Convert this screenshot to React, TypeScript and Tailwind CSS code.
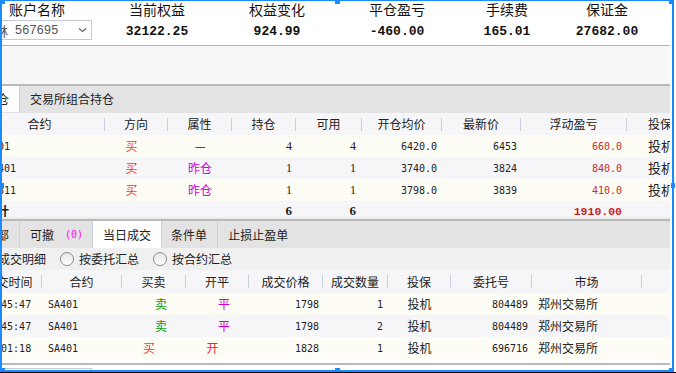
import React from 'react';

const mono = "font-['DejaVu_Sans_Mono','Noto_Sans_CJK_SC',monospace]";

const summary = [
  { label: '当前权益', value: '32122.25' },
  { label: '权益变化', value: '924.99' },
  { label: '平仓盈亏', value: '-460.00' },
  { label: '手续费', value: '165.01', narrow: true },
  { label: '保证金', value: '27682.00', narrow: true },
];

const positions = [
  { code: 'SM401', dir: '买', attr: '—', hold: '4', avail: '4', open: '6420.0', last: '6453', pnl: '660.0' },
  { code: 'rb2401', dir: '买', attr: '昨仓', hold: '1', avail: '1', open: '3740.0', last: '3824', pnl: '840.0' },
  { code: 'hc2311', dir: '买', attr: '昨仓', hold: '1', avail: '1', open: '3798.0', last: '3839', pnl: '410.0' },
];

const trades = [
  { time: '10:45:47', code: 'SA401', side: '卖', oc: '平', price: '1798', qty: '1', order: '804489' },
  { time: '10:45:47', code: 'SA401', side: '卖', oc: '平', price: '1798', qty: '2', order: '804489' },
  { time: '11:01:18', code: 'SA401', side: '买', oc: '开', price: '1828', qty: '1', order: '696716' },
];

function Sep() {
  return <span className="w-px h-[13px] bg-[#c9d0df] shrink-0" />;
}

function HeadCell({ w, text }: { w: string; text: string }) {
  return (
    <div className={`${w} shrink-0 flex items-center`}>
      <span className="flex-1 text-center">{text}</span>
      <Sep />
    </div>
  );
}

function Summary() {
  return (
    <div className="h-[45px] shrink-0 bg-white flex -ml-[23px]">
      <div className="w-[120px] shrink-0 flex flex-col">
        <div className="h-[20px] text-[14px] leading-[18px] text-center text-[#111]">账户名称</div>
        <div className="ml-[5px] w-[110px] h-[20px] border border-[#c3cad8] bg-white flex items-center pl-[12px] pr-[4px] text-[#555]">
          <span className="text-[13px] leading-none">林</span>
          <span className="ml-[7px] text-[12.5px] leading-none font-['Liberation_Sans',sans-serif] tracking-[0.3px]">567695</span>
          <svg className="ml-auto" width="9" height="6" viewBox="0 0 9 6">
            <path d="M1 1.5 L4.5 4.5 L8 1.5" fill="none" stroke="#666" strokeWidth="1.2" />
          </svg>
        </div>
      </div>
      {summary.map((s) => (
        <div key={s.label} className={`${s.narrow ? 'w-[100px]' : 'w-[120px]'} shrink-0 flex flex-col items-center`}>
          <div className="h-[20px] text-[14px] leading-[18px] text-[#111]">{s.label}</div>
          <div className="h-[22px] leading-[24px] text-[13px] font-bold text-[#111] font-['Liberation_Mono',monospace]">{s.value}</div>
        </div>
      ))}
    </div>
  );
}

function PositionPanel() {
  return (
    <div className="h-[131px] shrink-0 overflow-hidden flex flex-col">
      <div className="h-[27px] shrink-0 bg-[#e3e3e3] flex items-start text-[12px] text-[#222] -ml-[25px]">
        <div className="h-[26px] bg-white border-r border-[#c9d0df] px-[10px] flex items-center">持仓</div>
        <div className="h-[26px] px-[10px] flex items-center">交易所组合持仓</div>
      </div>
      <div className="-ml-[25px] text-[12px]">
        <div className="h-[22px] bg-[#f6f6f9] flex text-[#222]">
          <HeadCell w="w-[130px]" text="合约" />
          <HeadCell w="w-[63px]" text="方向" />
          <HeadCell w="w-[64px]" text="属性" />
          <HeadCell w="w-[64px]" text="持仓" />
          <HeadCell w="w-[66px]" text="可用" />
          <HeadCell w="w-[80px]" text="开仓均价" />
          <HeadCell w="w-[79px]" text="最新价" />
          <HeadCell w="w-[106px]" text="浮动盈亏" />
          <div className="w-[66px] shrink-0 flex items-center justify-center">投保</div>
        </div>
        {positions.map((p, i) => (
          <div key={p.code} className={`h-[22px] flex items-center ${i % 2 ? 'bg-[#f6f6f9]' : 'bg-[#fdfdf6]'}`}>
            <div className={`w-[130px] shrink-0 pl-[5px] text-[10px] ${mono} text-[#222]`}>{p.code}</div>
            <div className="w-[63px] shrink-0 text-center pr-[10px] text-[#ff3333]">{p.dir}</div>
            <div className={`w-[64px] shrink-0 text-center ${p.attr === '—' ? 'text-[#222]' : 'text-[#d000d0]'}`}>{p.attr}</div>
            <div className="w-[64px] shrink-0 text-right pr-[4px] text-[12px] font-['Liberation_Serif',serif] text-[#222]">{p.hold}</div>
            <div className="w-[66px] shrink-0 text-right pr-[6px] text-[12px] font-['Liberation_Serif',serif] text-[#222]">{p.avail}</div>
            <div className={`w-[80px] shrink-0 text-right pr-[5px] text-[10px] ${mono} text-[#222]`}>{p.open}</div>
            <div className={`w-[79px] shrink-0 text-right pr-[4px] text-[10px] ${mono} text-[#222]`}>{p.last}</div>
            <div className={`w-[106px] shrink-0 text-right pr-[5px] text-[10px] ${mono} text-[#c42b2b]`}>{p.pnl}</div>
            <div className="w-[66px] shrink-0 pl-[21px] text-[13px] text-[#222]">投机</div>
          </div>
        ))}
        <div className="h-[22px] flex items-start bg-[#f6f6f9] font-bold">
          <div className="w-[130px] shrink-0 pl-[10px] text-[12px] leading-[20px]">合计</div>
          <div className="w-[63px] shrink-0" />
          <div className="w-[64px] shrink-0" />
          <div className="w-[64px] shrink-0 text-right pr-[4px] text-[13px] leading-[20px] font-['Liberation_Serif',serif]">6</div>
          <div className="w-[66px] shrink-0 text-right pr-[6px] text-[13px] leading-[20px] font-['Liberation_Serif',serif]">6</div>
          <div className="w-[80px] shrink-0" />
          <div className="w-[79px] shrink-0" />
          <div className="w-[106px] shrink-0 text-right pr-[5px] text-[11.5px] leading-[21px] font-['Liberation_Mono',monospace] text-[#c81e1e]">1910.00</div>
        </div>
      </div>
    </div>
  );
}

function Radio({ label }: { label: string }) {
  return (
    <div className="flex items-center gap-[5px]">
      <span className="w-[14px] h-[14px] rounded-full border border-[#8a8a8a] bg-gradient-to-b from-[#e6e6e6] to-white" />
      <span>{label}</span>
    </div>
  );
}

function TradePanel() {
  return (
    <div className="h-[142px] shrink-0 overflow-hidden flex flex-col text-[12px] text-[#222]">
      <div className="h-[27px] shrink-0 bg-[#e3e3e3] flex items-start -ml-[25px]">
        <div className="h-[27px] border-r border-[#c9d0df] px-[10px] flex items-center">全部</div>
        <div className="h-[27px] border-r border-[#c9d0df] pl-[10px] pr-[9px] flex items-center">
          可撤<span className={`ml-[11px] text-[10px] ${mono} text-[#ff00ff]`}>(0)</span>
        </div>
        <div className="h-[27px] bg-white border-r border-[#c9d0df] px-[10px] flex items-center">当日成交</div>
        <div className="h-[27px] border-r border-[#c9d0df] pl-[9px] pr-[10px] flex items-center">条件单</div>
        <div className="h-[27px] px-[10px] flex items-center">止损止盈单</div>
      </div>
      <div className="h-[22px] shrink-0 bg-[#f0f0f0] flex items-center gap-[14px] -ml-[2px]">
        <span>成交明细</span>
        <Radio label="按委托汇总" />
        <Radio label="按合约汇总" />
      </div>
      <div className="-ml-[24px]">
        <div className="h-[23px] bg-[#f6f6f9] flex">
          <HeadCell w="w-[66px]" text="成交时间" />
          <HeadCell w="w-[80px]" text="合约" />
          <HeadCell w="w-[64px]" text="买卖" />
          <HeadCell w="w-[63px]" text="开平" />
          <HeadCell w="w-[74px]" text="成交价格" />
          <HeadCell w="w-[65px]" text="成交数量" />
          <HeadCell w="w-[63px]" text="投保" />
          <HeadCell w="w-[81px]" text="委托号" />
          <HeadCell w="w-[110px]" text="市场" />
        </div>
        {trades.map((t, i) => (
          <div key={i} className={`h-[22px] flex items-center ${i % 2 ? 'bg-[#f6f6f9]' : 'bg-[#fdfdf6]'}`}>
            <div className={`w-[66px] shrink-0 pl-[7px] text-[10px] ${mono}`}>{t.time}</div>
            <div className={`w-[80px] shrink-0 pl-[6px] text-[10px] ${mono}`}>{t.code}</div>
            {t.side === '卖' ? (
              <div className="w-[64px] shrink-0 text-center pl-[14px] text-[#109a10]">{t.side}</div>
            ) : (
              <div className="w-[64px] shrink-0 text-center pr-[10px] text-[#ff3333]">{t.side}</div>
            )}
            {t.oc === '平' ? (
              <div className="w-[63px] shrink-0 text-center pl-[13px] text-[#d000d0]">{t.oc}</div>
            ) : (
              <div className="w-[63px] shrink-0 text-center pr-[10px] text-[#ff2020]">{t.oc}</div>
            )}
            <div className={`w-[74px] shrink-0 text-right pr-[4px] text-[10px] ${mono}`}>{t.price}</div>
            <div className={`w-[65px] shrink-0 text-right pr-[5px] text-[10px] ${mono}`}>{t.qty}</div>
            <div className="w-[63px] shrink-0 text-center">投机</div>
            <div className={`w-[81px] shrink-0 text-right pr-[4px] text-[10px] ${mono}`}>{t.order}</div>
            <div className="w-[110px] shrink-0 pl-[6px]">郑州交易所</div>
          </div>
        ))}
      </div>
    </div>
  );
}

export default function App() {
  return (
    <div className="relative w-[676px] h-[373px] overflow-hidden bg-white text-[#1a1a1a] font-['Noto_Sans_CJK_SC',sans-serif]">
      <div className="w-[670px] h-[370px] overflow-hidden flex flex-col">
        <Summary />
        <div className="h-px shrink-0 bg-[#b5b5b5]" />
        <div className="h-[38px] shrink-0 bg-[#f7f7f7]" />
        <div className="h-[2px] shrink-0 bg-[#b9b9b9]" />
        <PositionPanel />
        <div className="h-[2px] shrink-0 bg-[#ececec]" />
        <div className="h-[2px] shrink-0 bg-[#b9b9b9]" />
        <TradePanel />
        <div className="h-[2px] shrink-0 bg-[#b9b9b9]" />
        <div className="flex-1 min-h-0 overflow-hidden bg-white pt-[3px]">
          <div className="w-[92px] h-[10px] border border-[#c3cad8]" />
        </div>
      </div>

      {/* selection frame round the capture */}
      <div className="absolute left-0 top-0 w-[674px] h-[372px] border-2 border-t border-[#1a8cff] pointer-events-none" />
      <div className="absolute left-0 bottom-0 w-full h-px bg-black" />
      <div className="absolute left-0 top-0 w-[5px] h-[4px] bg-[#1a8cff]" />
      <div className="absolute left-[335px] top-0 w-[5px] h-[4px] bg-[#1a8cff]" />
      <div className="absolute right-[2px] top-0 w-[5px] h-[4px] bg-[#1a8cff]" />
      <div className="absolute left-0 top-[183px] w-[4px] h-[5px] bg-[#1a8cff]" />
      <div className="absolute right-[1px] top-[183px] w-[4px] h-[5px] bg-[#1a8cff]" />
      <div className="absolute left-0 bottom-[1px] w-[5px] h-[4px] bg-[#1a8cff]" />
      <div className="absolute left-[335px] bottom-[1px] w-[5px] h-[4px] bg-[#1a8cff]" />
      <div className="absolute right-[2px] bottom-[1px] w-[5px] h-[4px] bg-[#1a8cff]" />
    </div>
  );
}
